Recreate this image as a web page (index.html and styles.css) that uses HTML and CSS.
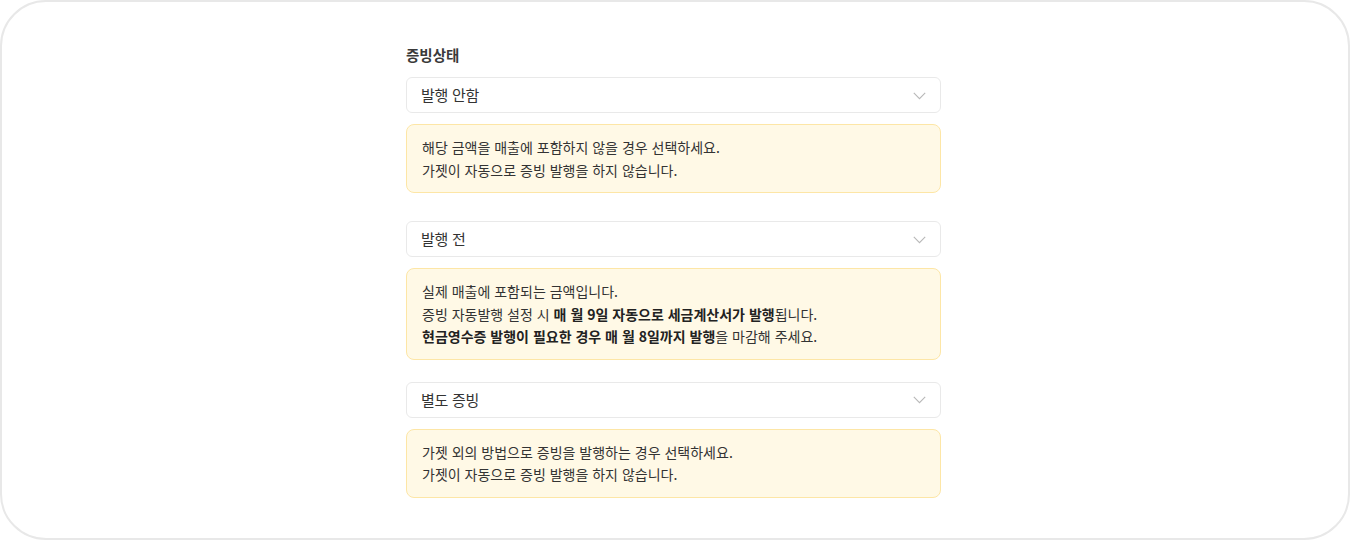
FILE: index.html
```html
<!DOCTYPE html>
<html lang="ko">
<head>
<meta charset="utf-8">
<title>증빙상태</title>
<link rel="stylesheet" href="styles.css">
</head>
<body>
<div class="frame">
  <div class="column">
    <div class="label">증빙상태</div>

    <div class="select">
      <span class="select-text">발행 안함</span>
      <svg class="chevron" width="13" height="8" viewBox="0 0 13 8"><path d="M0.8 0.8 L6.5 6.6 L12.2 0.8" fill="none" stroke="#b8b8b8" stroke-width="1.1"/></svg>
    </div>
    <div class="note">
      <p>해당 금액을 매출에 포함하지 않을 경우 선택하세요.</p>
      <p>가젯이 자동으로 증빙 발행을 하지 않습니다.</p>
    </div>

    <div class="select select-gap-lg">
      <span class="select-text">발행 전</span>
      <svg class="chevron" width="13" height="8" viewBox="0 0 13 8"><path d="M0.8 0.8 L6.5 6.6 L12.2 0.8" fill="none" stroke="#b8b8b8" stroke-width="1.1"/></svg>
    </div>
    <div class="note">
      <p>실제 매출에 포함되는 금액입니다.</p>
      <p>증빙 자동발행 설정 시 <b>매 월 9일 자동으로 세금계산서가 발행</b>됩니다.</p>
      <p><b>현금영수증 발행이 필요한 경우 매 월 8일까지 발행</b>을 마감해 주세요.</p>
    </div>

    <div class="select select-gap-md">
      <span class="select-text">별도 증빙</span>
      <svg class="chevron" width="13" height="8" viewBox="0 0 13 8"><path d="M0.8 0.8 L6.5 6.6 L12.2 0.8" fill="none" stroke="#b8b8b8" stroke-width="1.1"/></svg>
    </div>
    <div class="note">
      <p>가젯 외의 방법으로 증빙을 발행하는 경우 선택하세요.</p>
      <p>가젯이 자동으로 증빙 발행을 하지 않습니다.</p>
    </div>
  </div>
</div>
</body>
</html>
```

FILE: styles.css
```css
* { box-sizing: border-box; }

html, body {
  margin: 0;
  padding: 0;
  background: #ffffff;
}

body {
  font-family: "Noto Sans CJK KR", "Noto Sans", sans-serif;
  color: #333333;
}

.frame {
  width: 1350px;
  height: 540px;
  border: 2px solid #e8e8e8;
  border-radius: 46px;
  padding-top: 43px;
  padding-left: 404px;
  overflow: hidden;
}

.column {
  width: 535px;
  display: flex;
  flex-direction: column;
}

.label {
  font-size: 14.5px;
  font-weight: 600;
  line-height: 20px;
  color: #3a3a3a;
  margin-bottom: 12px;
}

.select {
  height: 36px;
  border: 1px solid #e9e9e9;
  border-radius: 6px;
  padding: 0 14px 0 14px;
  display: flex;
  align-items: center;
  justify-content: space-between;
  background: #ffffff;
}

.select-gap-lg { margin-top: 28px; }
.select-gap-md { margin-top: 22px; }

.select-text {
  font-size: 15px;
  line-height: 20px;
  letter-spacing: -0.3px;
  color: #333333;
}

.chevron {
  display: block;
  margin-top: 1px;
}

.note {
  margin-top: 11px;
  background: #fff9e6;
  border: 1px solid #fde6a6;
  border-radius: 8px;
  padding: 11px 15px;
}

.note p {
  margin: 0;
  font-size: 14px;
  line-height: 22.5px;
  color: #333333;
}

.note b {
  font-weight: 700;
  color: #222222;
}
```
